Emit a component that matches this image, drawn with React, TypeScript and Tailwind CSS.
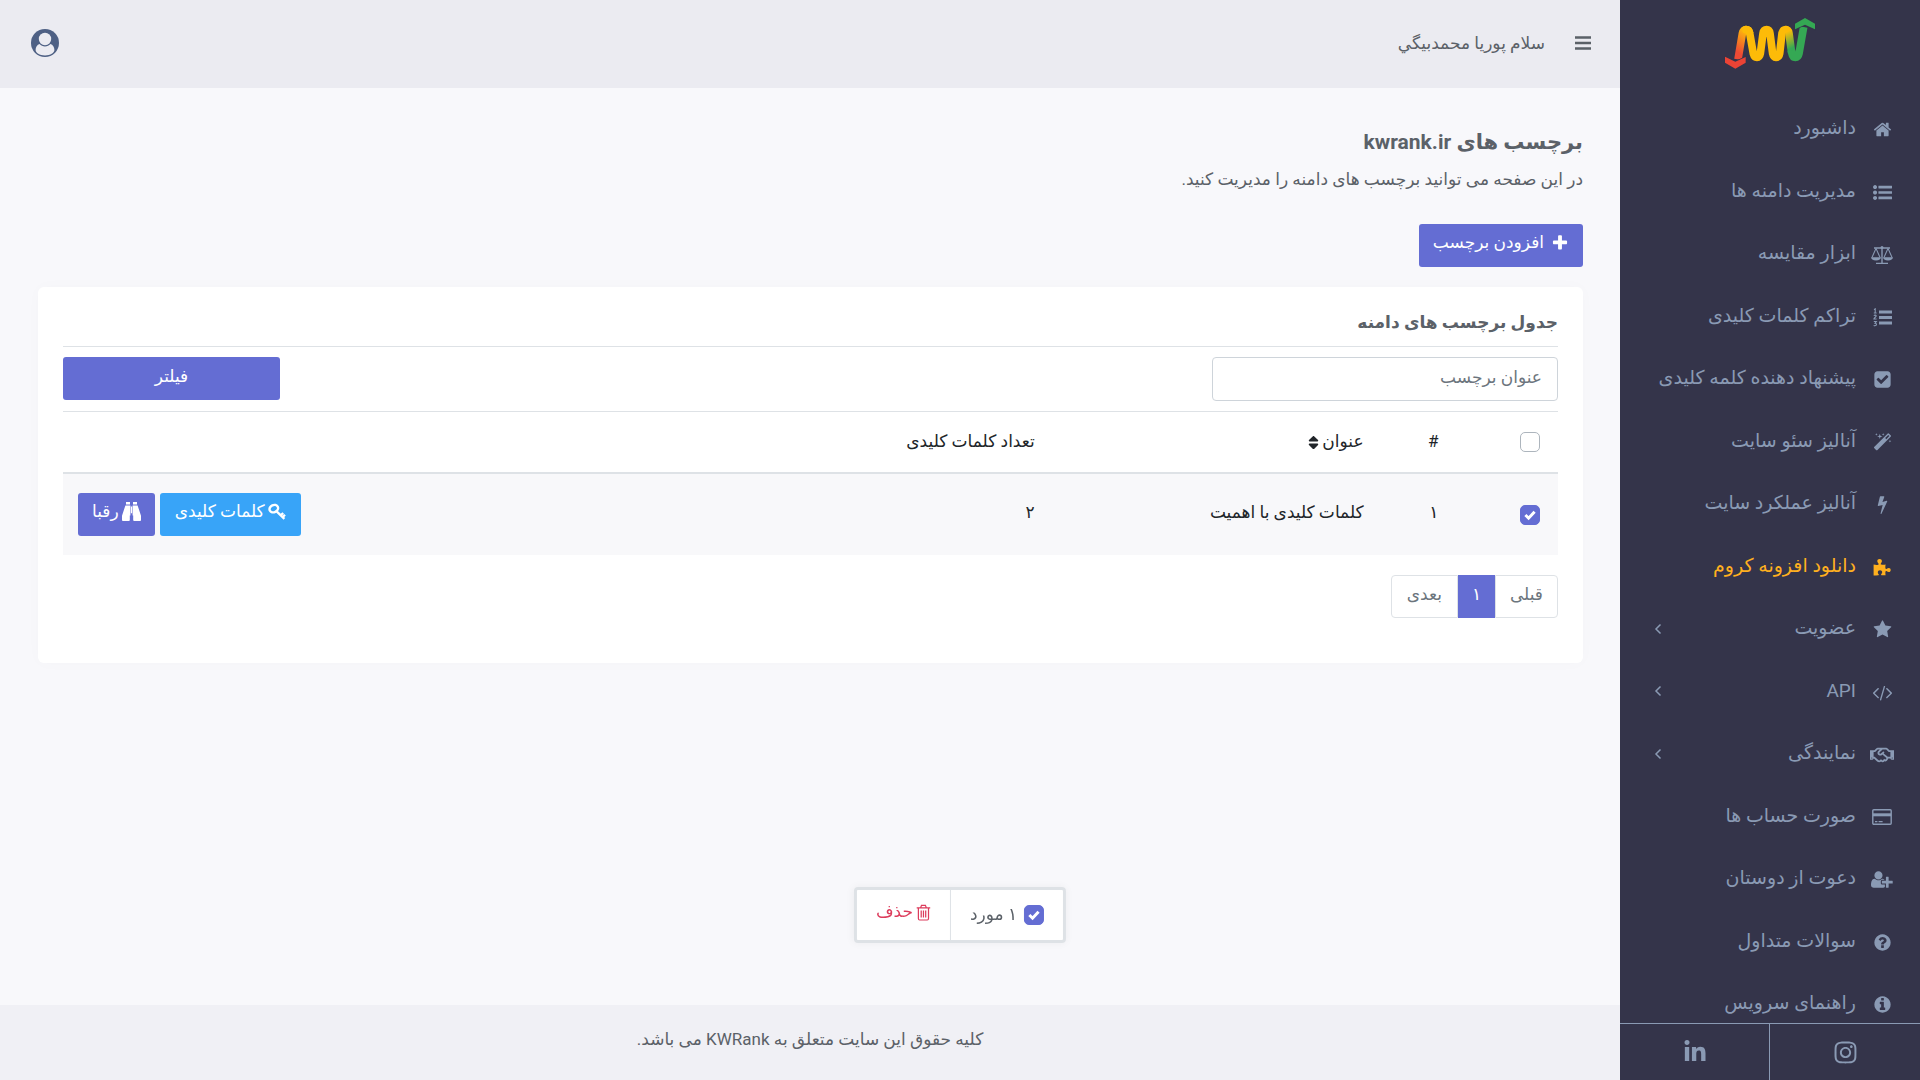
import React, { useState } from 'react';
import { FaInstagram, FaLinkedinIn, FaRegHandshake, FaSort } from 'react-icons/fa';

type IconProps = { d: string; box?: string; className?: string };

const Glyph = ({ d, box = '0 0 1792 1792', className = 'h-[19px] w-auto' }: IconProps) => (
    <svg viewBox={box} className={className} fill="currentColor" aria-hidden="true">
        <path d={d} />
    </svg>
);

const home = 'M1472 992v480q0 26-19 45t-45 19h-384v-384h-256v384h-384q-26 0-45-19t-19-45v-480q0-1 .5-3t.5-3l575-474 575 474q1 2 1 6zm223-69l-62 74q-8 9-21 11h-3q-13 0-21-7l-692-577-692 577q-12 8-24 7-13-2-21-11l-62-74q-8-10-7-23.5t11-21.5l719-599q32-26 76-26t76 26l244 204v-195q0-14 9-23t23-9h192q14 0 23 9t9 23v408l219 182q10 8 11 21.5t-7 23.5z';
const list = 'M384 1408q0 80-56 136t-136 56-136-56-56-136 56-136 136-56 136 56 56 136zm0-512q0 80-56 136t-136 56-136-56-56-136 56-136 136-56 136 56 56 136zm1408 416v192q0 13-9.5 22.5t-22.5 9.5h-1216q-13 0-22.5-9.5t-9.5-22.5v-192q0-13 9.5-22.5t22.5-9.5h1216q13 0 22.5 9.5t9.5 22.5zm-1408-928q0 80-56 136t-136 56-136-56-56-136 56-136 136-56 136 56 56 136zm1408 416v192q0 13-9.5 22.5t-22.5 9.5h-1216q-13 0-22.5-9.5t-9.5-22.5v-192q0-13 9.5-22.5t22.5-9.5h1216q13 0 22.5 9.5t9.5 22.5zm0-512v192q0 13-9.5 22.5t-22.5 9.5h-1216q-13 0-22.5-9.5t-9.5-22.5v-192q0-13 9.5-22.5t22.5-9.5h1216q13 0 22.5 9.5t9.5 22.5z';
const checkSquare = 'M813 1299l614-614q19-19 19-45t-19-45l-102-102q-19-19-45-19t-45 19l-467 467-211-211q-19-19-45-19t-45 19l-102 102q-19 19-19 45t19 45l358 358q19 19 45 19t45-19zm851-883v960q0 119-84.5 203.5t-203.5 84.5h-960q-119 0-203.5-84.5t-84.5-203.5v-960q0-119 84.5-203.5t203.5-84.5h960q119 0 203.5 84.5t84.5 203.5z';
const magic = 'M1254 581l293-293-107-107-293 293zm447-293q0 27-18 45l-1286 1286q-18 18-45 18t-45-18l-198-198q-18-18-18-45t18-45l1286-1286q18-18 45-18t45 18l198 198q18 18 18 45zm-1351-190l98 30-98 30-30 98-30-98-98-30 98-30 30-98zm350 162l196 60-196 60-60 196-60-196-196-60 196-60 60-196zm930 478l98 30-98 30-30 98-30-98-98-30 98-30 30-98zm-640-640l98 30-98 30-30 98-30-98-98-30 98-30 30-98z';
const bolt = 'M1333 566q18 20 7 44l-540 1157q-13 25-42 25-4 0-14-2-17-5-25.5-19t-4.5-30l197-808-406 101q-4 1-12 1-18 0-31-11-18-15-13-39l201-825q4-14 16-23t28-9h328q19 0 32 12.5t13 29.5q0 8-5 18l-171 463 396-98q8-2 12-2 19 0 34 15z';
const star = 'M1728 647q0 22-26 48l-363 354 86 500q1 7 1 20 0 21-10.5 35.5t-30.5 14.5q-19 0-40-12l-449-236-449 236q-22 12-40 12-21 0-31.5-14.5t-10.5-35.5q0-6 2-20l86-500-364-354q-25-27-25-48 0-37 56-46l502-73 225-455q19-41 49-41t49 41l225 455 502 73q56 9 56 46z';
const code = 'M553 1399l-50 50q-10 10-23 10t-23-10l-466-466q-10-10-10-23t10-23l466-466q10-10 23-10t23 10l50 50q10 10 10 23t-10 23l-393 393 393 393q10 10 10 23t-10 23zm591-1067l-373 1291q-4 13-15.5 19.5t-23.5 2.5l-62-17q-13-4-19.5-15.5t-2.5-24.5l373-1291q4-13 15.5-19.5t23.5-2.5l62 17q13 4 19.5 15.5t2.5 24.5zm657 651l-466 466q-10 10-23 10t-23-10l-50-50q-10-10-10-23t10-23l393-393-393-393q-10-10-10-23t10-23l50-50q10-10 23-10t23 10l466 466q10 10 10 23t-10 23z';
const userPlus = 'M704 896q-159 0-271.5-112.5t-112.5-271.5 112.5-271.5 271.5-112.5 271.5 112.5 112.5 271.5-112.5 271.5-271.5 112.5zm960 128h352q13 0 22.5 9.5t9.5 22.5v192q0 13-9.5 22.5t-22.5 9.5h-352v352q0 13-9.5 22.5t-22.5 9.5h-192q-13 0-22.5-9.5t-9.5-22.5v-352h-352q-13 0-22.5-9.5t-9.5-22.5v-192q0-13 9.5-22.5t22.5-9.5h352v-352q0-13 9.5-22.5t22.5-9.5h192q13 0 22.5 9.5t9.5 22.5v352zm-736 224q0 52 38 90t90 38h256v238q-68 50-171 50h-874q-121 0-194-69t-73-190q0-53 3.5-103.5t14-109 26.5-108.5 43-97.5 62-81 85.5-53.5 111.5-20q19 0 39 17 79 61 154.5 91.5t164.5 30.5 164.5-30.5 154.5-91.5q20-17 39-17 132 0 217 96h-223q-52 0-90 38t-38 90v192z';
const question = 'M1024 1376v-192q0-14-9-23t-23-9h-192q-14 0-23 9t-9 23v192q0 14 9 23t23 9h192q14 0 23-9t9-23zm256-672q0-88-55.5-163t-138.5-116-170-41q-243 0-371 213-15 24 8 42l132 100q7 6 19 6 16 0 25-12 53-68 86-92 34-24 86-24 48 0 85.5 26t37.5 59q0 38-20 61t-68 45q-63 28-115.5 86.5t-52.5 125.5v36q0 14 9 23t23 9h192q14 0 23-9t9-23q0-19 21.5-49.5t54.5-49.5q32-18 49-28.5t46-35 44.5-48 28-60.5 12.5-81zm384 192q0 209-103 385.5t-279.5 279.5-385.5 103-385.5-103-279.5-279.5-103-385.5 103-385.5 279.5-279.5 385.5-103 385.5 103 279.5 279.5 103 385.5z';
const info = 'M1152 1376v-160q0-14-9-23t-23-9h-96v-512q0-14-9-23t-23-9h-320q-14 0-23 9t-9 23v160q0 14 9 23t23 9h96v320h-96q-14 0-23 9t-9 23v160q0 14 9 23t23 9h448q14 0 23-9t9-23zm-128-896v-160q0-14-9-23t-23-9h-192q-14 0-23 9t-9 23v160q0 14 9 23t23 9h192q14 0 23-9t9-23zm640 416q0 209-103 385.5t-279.5 279.5-385.5 103-385.5-103-279.5-279.5-103-385.5 103-385.5 279.5-279.5 385.5-103 385.5 103 279.5 279.5 103 385.5z';
const plus = 'M1600 736v192q0 40-28 68t-68 28h-416v416q0 40-28 68t-68 28h-192q-40 0-68-28t-28-68v-416h-416q-40 0-68-28t-28-68v-192q0-40 28-68t68-28h416v-416q0-40 28-68t68-28h192q40 0 68 28t28 68v416h416q40 0 68 28t28 68z';

const ScaleIcon = () => (
    <svg viewBox="0 0 24 20" className="h-5 w-6" fill="none" stroke="currentColor" strokeWidth="1.1" aria-hidden="true">
        <path d="M4 3h16M12 2v16M6 18.4h12" strokeWidth="1.4" />
        <circle cx="12" cy="2.6" r="1.5" fill="currentColor" stroke="none" />
        <path d="M6 3.4L2 12.4M6 3.4l4 9M18 3.4l-4 9M18 3.4l4 9" />
        <path d="M1 12.2h10c0 2-2 3.2-5 3.2s-5-1.2-5-3.2zM13 12.2h10c0 2-2 3.2-5 3.2s-5-1.2-5-3.2z" fill="currentColor" stroke="none" />
    </svg>
);

const NumberedListIcon = () => (
    <svg viewBox="0 0 19 19" className="h-[19px] w-[19px]" fill="none" stroke="currentColor" aria-hidden="true">
        <path d="M6 4h13M6 9.500h13M6 15h13" strokeWidth="3" />
        <path d="M1 1.600l1.200-.8v4M.8 5h2.800M.8 7.600c1-.9 2.400-.5 2.400.5 0 .9-2.300 1.600-2.300 2.900h2.700M.8 13.500h2.500l-1.300 1.700c2 0 1.900 2.600-.1 2.600-.5 0-.9-.2-1.200-.5" strokeWidth="1.100" />
    </svg>
);

const PuzzleIcon = () => (
    <svg viewBox="0 0 18 18" className="h-[18px] w-[18px]" fill="currentColor" aria-hidden="true">
        <path d="M.6 6.600c1.700.3 3.400.4 4.700.1.500-.2.400-.8 0-1.400C4.800 4.600 4.300 4 4.300 3c0-1.200.9-2 2.300-2s2.300.8 2.300 2c0 1-.5 1.500-.9 2.200-.4.700-.4 1.200.2 1.400 1.300.3 3 .3 4.400 0-.2 1.200-.4 2.800-.1 3.900.2.600.8.600 1.400.2.500-.4 1-.8 1.900-.8 1.200 0 1.900.9 1.900 2.100s-.7 2.100-1.900 2.100c-.9 0-1.400-.4-1.900-.8-.6-.4-1.200-.4-1.400.3-.3 1-.1 2.600.1 3.700-1.200-.1-2.600.2-4.100 0-.5-.1-.6-.6-.2-1.200.4-.5.900-1.100.9-1.900 0-1.200-.9-2-2.200-2s-2.200.8-2.200 2c0 .9.500 1.500.9 2.100.3.500.2.900-.3 1-1.500.2-3.200.2-4.800.3z" />
    </svg>
);

const CardIcon = () => (
    <svg viewBox="0 0 20 16" className="h-4 w-5" fill="none" stroke="currentColor" aria-hidden="true">
        <rect x=".8" y=".7" width="18.4" height="14.6" rx="1" strokeWidth="1.4" />
        <path d="M1 5.8h18" strokeWidth="3" />
        <path d="M3 12.6h2.4M6.6 12.6h4" strokeWidth="1.3" />
    </svg>
);

const KeyIcon = () => (
    <svg viewBox="0 0 18 18" className="h-[18px] w-[18px]" fill="none" stroke="currentColor" aria-hidden="true">
        <ellipse cx="5.8" cy="5.6" rx="4.4" ry="3.6" strokeWidth="2.4" transform="rotate(-25 5.8 5.6)" />
        <path d="M8.6 8.4l7.8 7.4M12.6 12.4l2.6-2.4M14.6 14.2l2.4-2.4" strokeWidth="2.3" />
    </svg>
);

const BinocularsIcon = () => (
    <svg viewBox="0 0 19 19" className="h-[19px] w-[19px]" fill="currentColor" aria-hidden="true">
        <path d="M4 0h4v2.600H4zM11 0h4v2.600h-4zM3.400 3.400h5v10h-.6V18c0 .6-.3 1-.9 1H.9c-.6 0-.9-.4-.9-1v-4.300zM15.600 3.400h-5v10h.6V18c0 .6.3 1 .9 1h6c.6 0 .9-.4.900-1v-4.300zM8.900 4.400h1.200v6.800H8.900z" />
    </svg>
);

const TrashIcon = () => (
    <svg viewBox="0 0 16 18" className="h-[17px] w-[15px]" fill="none" stroke="currentColor" strokeWidth="1.3" aria-hidden="true">
        <path d="M.8 4h14.4M5 4l.9-2.6h4.2L11 4M2.6 4v11.4c0 .9.5 1.6 1.3 1.6h8.2c.8 0 1.3-.7 1.3-1.6V4M5.6 6.8v7.4M8 6.8v7.4M10.4 6.8v7.4" />
    </svg>
);

const MenuIcon = () => (
    <svg viewBox="0 0 16 14" className="h-[14px] w-4" stroke="currentColor" strokeWidth="2.600" aria-hidden="true">
        <path d="M0 1.500h16M0 7h16M0 12.500h16" />
    </svg>
);

const UserIcon = () => (
    <svg viewBox="0 0 28 28" className="h-7 w-7" aria-hidden="true">
        <circle cx="14" cy="14" r="14" fill="#4e6084" />
        <path d="M14 26.400c-5.400 0-9.400-2.700-9.400-5.400 0-2.900 1.500-5.400 4-6 1.300 1.500 3.200 2.400 5.400 2.400s4.100-.9 5.400-2.400c2.500.6 4 3.100 4 6 0 2.700-4 5.400-9.400 5.400z" fill="#ebebf1" />
        <circle cx="14" cy="10" r="6.200" fill="#ebebf1" />
    </svg>
);

const Logo = () => (
    <svg viewBox="312 50 276 156" className="h-[52px] w-[92px]" fill="none" aria-label="KWRank">
        <defs>
            <linearGradient id="fall" gradientUnits="userSpaceOnUse" x1="345" y1="150" x2="382" y2="95">
                <stop offset="0" stopColor="#ee4a35" />
                <stop offset="1" stopColor="#fdb90b" />
            </linearGradient>
            <linearGradient id="rise" gradientUnits="userSpaceOnUse" x1="500" y1="95" x2="522" y2="140">
                <stop offset="0" stopColor="#fdbb08" />
                <stop offset="1" stopColor="#35a854" />
            </linearGradient>
        </defs>
        <path d="M354 177L367 100Q370 88 378 88Q387 88 389 100" stroke="url(#fall)" strokeWidth="23" />
        <path d="M378 88Q387 88 389 98L400 160Q403 171 411 171Q419 171 421 160L429 99Q431 88 440 88Q448 88 450 99L458 160Q460 171 468 171Q477 171 479 160L486 99Q489 88 497 88" stroke="#fdbb08" strokeWidth="23" strokeLinecap="round" />
        <path d="M497 88Q505 88 507 99L515 158" stroke="url(#rise)" strokeWidth="23" />
        <path d="M514 150L516 160Q518 171 526 171Q535 171 537 160L551 80" stroke="#35a854" strokeWidth="23" />
        <g stroke="#34344a" strokeWidth="4" style={{ paintOrder: 'stroke' }}>
            <path d="M315 169L346 184L377 170V187L346 205L315 187Z" fill="#ea4335" />
            <path d="M525 87V70L555 53L585 70V87L555 73Z" fill="#34a853" />
        </g>
    </svg>
);

const menu = [
    { title: 'داشبورد', icon: <Glyph d={home} /> },
    { title: 'مدیریت دامنه ها', icon: <Glyph d={list} /> },
    { title: 'ابزار مقایسه', icon: <ScaleIcon /> },
    { title: 'تراکم کلمات کلیدی', icon: <NumberedListIcon /> },
    { title: 'پیشنهاد دهنده کلمه کلیدی', icon: <Glyph d={checkSquare} /> },
    { title: 'آنالیز سئو سایت', icon: <Glyph d={magic} /> },
    { title: 'آنالیز عملکرد سایت', icon: <Glyph d={bolt} /> },
    { title: 'دانلود افزونه کروم', icon: <PuzzleIcon />, active: true },
    { title: 'عضویت', icon: <Glyph d={star} />, children: true },
    { title: 'API', icon: <Glyph d={code} />, children: true },
    { title: 'نمایندگی', icon: <FaRegHandshake size={24} />, children: true },
    { title: 'صورت حساب ها', icon: <CardIcon /> },
    { title: 'دعوت از دوستان', icon: <Glyph d={userPlus} box="0 0 2048 1792" /> },
    { title: 'سوالات متداول', icon: <Glyph d={question} /> },
    { title: 'راهنمای سرویس', icon: <Glyph d={info} /> },
];

const Sidebar = () => (
    <aside className="sticky top-0 flex h-screen w-[300px] shrink-0 flex-col bg-[#34344a] text-[#8a9ab4]">
        <a href="#" className="flex h-[97px] shrink-0 justify-center pt-[17px]"><Logo /></a>
        <nav className="min-h-0 flex-1 overflow-hidden">
            <ul>
                {menu.map((item) => (
                    <li key={item.title} className="h-[62px] odd:h-[63px]">
                        <a href="#" className={`flex h-full items-center pr-[24px] pl-[34px] text-[19px] ${item.active ? 'text-[#ffb01f]' : ''}`}>
                            <span className="ml-3 flex w-7 justify-center pt-[2px]">{item.icon}</span>
                            <span className="flex-1 whitespace-nowrap">{item.title}</span>
                            {item.children && (
                                <svg viewBox="0 0 8 12" className="h-3 w-2" fill="none" stroke="currentColor" strokeWidth="1.5" aria-hidden="true">
                                    <path d="M6.500 1.500L2 6l4.500 4.500" />
                                </svg>
                            )}
                        </a>
                    </li>
                ))}
            </ul>
        </nav>
        <div className="grid h-[57px] shrink-0 grid-cols-2 border-t border-[#8a9ab4]">
            <a href="#" aria-label="Instagram" className="flex items-center justify-center"><FaInstagram size={25} /></a>
            <a href="#" aria-label="LinkedIn" className="flex items-center justify-center border-r border-[#8a9ab4]"><FaLinkedinIn size={24} /></a>
        </div>
    </aside>
);

type CheckProps = { label: string; checked: boolean; onChange: () => void };

const Check = ({ label, checked, onChange }: CheckProps) => (
    <span className="relative inline-flex h-5 w-5 shrink-0">
        <input
            type="checkbox"
            aria-label={label}
            checked={checked}
            onChange={onChange}
            className="h-5 w-5 appearance-none rounded-[5px] border border-[#adb5bd] bg-white checked:border-[#646dd3] checked:bg-[#646dd3]"
        />
        {checked && (
            <svg viewBox="0 0 20 20" className="pointer-events-none absolute inset-0" fill="none" stroke="white" strokeWidth="3" aria-hidden="true">
                <path d="M5.400 10l3.200 3.200 6-6.400" />
            </svg>
        )}
    </span>
);

const App = () => {
    const [all, setAll] = useState(false);
    const [selected, setSelected] = useState(true);
    const [title, setTitle] = useState('');

    return (
        <div dir="rtl" lang="fa" className="flex min-h-screen bg-[#f8f8fb] font-[Roboto,'DejaVu_Sans',sans-serif] text-[17px] text-[#5b6168]">
            <Sidebar />

            <div className="flex min-w-0 flex-1 flex-col">
                <header className="flex h-[88px] items-center justify-between bg-[#ebebf1] pr-[29px] pb-[3px] pl-[31px]">
                    <div className="flex items-center gap-[30px]">
                        <button type="button" aria-label="منو"><MenuIcon /></button>
                        <span className="pt-[3px]">سلام پوریا محمدبيگي</span>
                    </div>
                    <button type="button" aria-label="حساب کاربری"><UserIcon /></button>
                </header>

                <main className="flex-1 pt-9 pr-[37px] pl-[38px]">
                    <h1 className="text-[21px] leading-9 font-bold">برچسب های kwrank.ir</h1>
                    <p className="mt-[3px] mb-[29px] leading-8">در این صفحه می توانید برچسب های دامنه را مدیریت کنید.</p>
                    <button type="button" className="flex h-[43px] items-center gap-[7px] rounded-[3px] bg-[#646dd3] px-[14px] pb-[5px] font-medium text-white">
                        <Glyph d={plus} className="h-[18px] w-[18px]" />
                        افزودن برچسب
                    </button>

                    <section className="mt-5 rounded-md bg-white px-[25px] pt-5 pb-[45px] shadow-[0_0_16px_rgba(0,0,0,0.02)]">
                        <h2 className="pb-2 text-[17px] leading-[31px] font-bold">جدول برچسب های دامنه</h2>
                        <form className="flex justify-between border-y border-[#dee2e6] py-[10px]" onSubmit={(e) => e.preventDefault()}>
                            <input
                                type="text"
                                aria-label="عنوان برچسب"
                                placeholder="عنوان برچسب"
                                value={title}
                                onChange={(e) => setTitle(e.target.value)}
                                className="h-11 w-[346px] rounded-[4px] border border-[#ced4da] px-[15px] pb-1 placeholder:text-[#6c757d]"
                            />
                            <button type="submit" className="h-[43px] w-[217px] rounded-[3px] bg-[#646dd3] pb-1 font-medium text-white">فیلتر</button>
                        </form>
                        <table className="w-full table-fixed text-right text-[#212529]">
                            <thead>
                                <tr className="h-[61px] border-b-2 border-[#dee2e6]">
                                    <th className="w-[7%] px-[18px]">
                                        <span className="flex"><Check label="انتخاب همه" checked={all} onChange={() => setAll(!all)} /></span>
                                    </th>
                                    <th className="w-[5%] px-[15px] font-normal">#</th>
                                    <th className="w-[22%] px-[15px] font-normal">
                                        <span className="flex items-center">عنوان <FaSort size={17} /></span>
                                    </th>
                                    <th className="px-[15px] font-normal">تعداد کلمات کلیدی</th>
                                    <th className="w-[20%]" aria-label="عملیات"></th>
                                </tr>
                            </thead>
                            <tbody>
                                <tr className="h-[82px] bg-[#f8f8fa]">
                                    <td className="px-[18px]">
                                        <span className="flex"><Check label="کلمات کلیدی با اهمیت" checked={selected} onChange={() => setSelected(!selected)} /></span>
                                    </td>
                                    <td className="px-[15px] pb-1">۱</td>
                                    <td className="px-[15px] pb-1">کلمات کلیدی با اهمیت</td>
                                    <td className="px-[15px] pb-1">۲</td>
                                    <td className="px-[15px]">
                                        <span className="flex justify-end gap-[5px]">
                                            <a href="#" className="flex h-[43px] items-center gap-[3px] rounded-[3px] bg-[#38a4f8] px-[15px] pb-[6px] font-medium whitespace-nowrap text-white">
                                                <KeyIcon /> کلمات کلیدی
                                            </a>
                                            <a href="#" className="flex h-[43px] items-center gap-[3px] rounded-[3px] bg-[#646dd3] px-[14px] pb-[6px] font-medium whitespace-nowrap text-white">
                                                <BinocularsIcon /> رقبا
                                            </a>
                                        </span>
                                    </td>
                                </tr>
                            </tbody>
                        </table>
                        <nav className="mt-5 flex h-[43px] text-[#6c757d]">
                            <a href="#" className="flex items-center rounded-r-[4px] border border-[#dee2e6] px-[14px] pb-1">قبلی</a>
                            <a href="#" className="flex w-[37px] items-center justify-center bg-[#646dd3] pb-1 text-white">۱</a>
                            <a href="#" className="flex items-center rounded-l-[4px] border border-[#dee2e6] px-[15px] pb-1">بعدی</a>
                        </nav>
                    </section>
                </main>

                <footer className="flex h-[75px] items-center justify-center bg-[#f0f0f5] pb-[6px]">
                    کلیه حقوق این سایت متعلق به KWRank می باشد.
                </footer>
            </div>

            {selected && (
                <div className="fixed bottom-[137px] left-1/2 flex h-[56px] -translate-x-1/2 rounded-[4px] border-3 border-[#dee2e6] bg-white shadow-[0_0_8px_rgba(0,0,0,0.05)]">
                    <div className="flex items-center gap-[7px] border-l border-[#dee2e6] px-[19px]">
                        <Check label="مورد انتخاب شده" checked={selected} onChange={() => setSelected(false)} />
                        ۱ مورد
                    </div>
                    <button type="button" className="flex items-center gap-[3px] px-[19px] pb-[6px] text-[#dc3c5c]">
                        <TrashIcon /> حذف
                    </button>
                </div>
            )}
        </div>
    );
};

export default App;
